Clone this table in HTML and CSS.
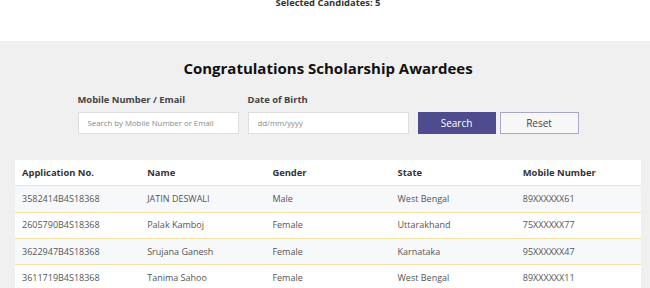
FILE: index.html
```html
<!DOCTYPE html>
<html lang="en">
<head>
    <meta charset="UTF-8">
    <meta name="viewport" content="width=device-width, initial-scale=1.0">
    <title>Scholarship Awardees</title>
    <link rel="stylesheet" href="styles.css">
</head>
<body>
    <div class="summary">
        <p>Selected Candidates: 5</p>
    </div>

    <section class="awardees">
        <h2>Congratulations Scholarship Awardees</h2>

        <form class="search-form">
            <div class="field">
                <label>Mobile Number / Email</label>
                <input type="text" placeholder="Search by Mobile Number or Email">
            </div>
            <div class="field">
                <label>Date of Birth</label>
                <input type="text" placeholder="dd/mm/yyyy">
            </div>
            <button type="button" class="btn-search">Search</button>
            <button type="reset" class="btn-reset">Reset</button>
        </form>

        <table class="results">
            <thead>
                <tr>
                    <th>Application No.</th>
                    <th>Name</th>
                    <th>Gender</th>
                    <th>State</th>
                    <th>Mobile Number</th>
                </tr>
            </thead>
            <tbody>
                <tr>
                    <td>3582414B4S18368</td>
                    <td>JATIN DESWALI</td>
                    <td>Male</td>
                    <td>West Bengal</td>
                    <td>89XXXXXX61</td>
                </tr>
                <tr>
                    <td>2605790B4S18368</td>
                    <td>Palak Kamboj</td>
                    <td>Female</td>
                    <td>Uttarakhand</td>
                    <td>75XXXXXX77</td>
                </tr>
                <tr>
                    <td>3622947B4S18368</td>
                    <td>Srujana Ganesh</td>
                    <td>Female</td>
                    <td>Karnataka</td>
                    <td>95XXXXXX47</td>
                </tr>
                <tr>
                    <td>3611719B4S18368</td>
                    <td>Tanima Sahoo</td>
                    <td>Female</td>
                    <td>West Bengal</td>
                    <td>89XXXXXX11</td>
                </tr>
            </tbody>
        </table>
    </section>
</body>
</html>
```

FILE: styles.css
```css
body {
    margin: 0;
    font-family: "Open Sans", "Noto Sans", sans-serif;
    color: #333;
}
.summary {
    height: 41px;
    background: #fff;
    padding-left: 6px;
    text-align: center;
}
.summary p {
    margin: 0;
    position: relative;
    top: -4px;
    font-size: 9.4px;
    font-weight: bold;
    color: #333;
}
.awardees {
    background: #f0f0f0;
    padding: 15px 9px 20px 15px;
}
.awardees h2 {
    margin: 0 0 13px;
    text-align: center;
    font-size: 15px;
    line-height: 24px;
    color: #111;
}
.search-form {
    display: flex;
    align-items: flex-end;
    justify-content: center;
    gap: 8px;
    margin-bottom: 25px;
}
.field {
    display: flex;
    flex-direction: column;
    gap: 6px;
    margin-right: 1px;
}
.field label {
    font-size: 9.4px;
    font-weight: bold;
    color: #444;
}
.field input {
    width: 161px;
    height: 22px;
    box-sizing: border-box;
    border: 1px solid #dedede;
    background: #fff;
    padding: 0 9px;
    font-family: inherit;
    font-size: 7.8px;
}
.field input::placeholder {
    color: #888;
}
button {
    height: 22px;
    box-sizing: border-box;
    font-family: inherit;
    font-size: 10px;
    cursor: pointer;
}
.btn-search {
    width: 78px;
    background: #4e4b8f;
    border: 1px solid #4e4b8f;
    color: #fff;
}
.btn-reset {
    width: 79px;
    margin-left: -4px;
    background: #f7f7f8;
    border: 1px solid #a9a7cf;
    color: #444;
}
.results {
    width: 100%;
    border-collapse: collapse;
    table-layout: fixed;
    font-size: 9px;
}
.results th,
.results td {
    text-align: left;
    padding: 0 7px;
    height: 25.3px;
    line-height: 12px;
    border-top: 1px solid #fbe3a8;
}
.results th {
    background: #fff;
    font-weight: bold;
    font-size: 9.4px;
    color: #333;
    border-top-color: #fdf0cf;
}
.results td {
    color: #555;
}
.results tbody tr:nth-child(odd) td {
    background: #f7f8fa;
}
.results tbody tr:nth-child(even) td {
    background: #fff;
}
```
